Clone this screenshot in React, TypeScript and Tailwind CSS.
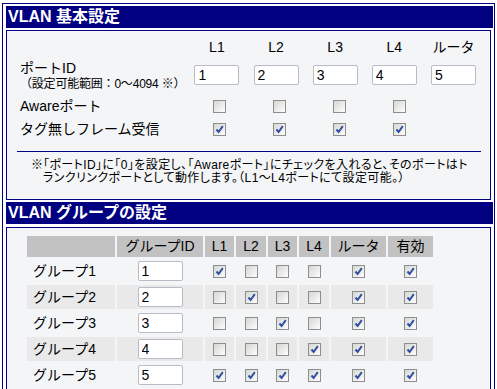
import React from "react"

const font = "font-['Liberation_Sans','Noto_Sans_CJK_JP',sans-serif]"

function Check({ on }: { on?: boolean }) {
  return (
    <span className="inline-flex w-[13px] h-[13px] border border-[#8e8e8e] bg-linear-to-br from-[#d6d6d2] to-[#fdfdfd] items-center justify-center">
      {on && (
        <svg width="9" height="9" viewBox="0 0 9 9">
          <path d="M1.5 4.5 L3.6 7 L7.8 1.2" stroke="#2f4ea4" strokeWidth="2" fill="none" />
        </svg>
      )}
    </span>
  )
}

function Field({ value }: { value: string }) {
  return (
    <input
      readOnly
      value={value}
      className="w-[45px] h-[20px] border border-[#b7bcc6] rounded-[2px] bg-white px-[3px] text-[14px] leading-none text-black outline-none"
    />
  )
}

function Header({ title }: { title: string }) {
  return (
    <div className="h-[22px] bg-[#000080] text-white font-bold text-[16px] leading-[22px] pl-[2px]">{title}</div>
  )
}

const ports = ["L1", "L2", "L3", "L4", "ルータ"]

const groups = [
  { name: "グループ1", id: "1", flags: [true, false, false, false, true, true] },
  { name: "グループ2", id: "2", flags: [false, true, false, false, true, true] },
  { name: "グループ3", id: "3", flags: [false, false, true, false, true, true] },
  { name: "グループ4", id: "4", flags: [false, false, false, true, true, true] },
  { name: "グループ5", id: "5", flags: [true, true, true, true, true, true] },
]

export default function App() {
  return (
    <div className={`bg-white min-h-screen text-black ${font}`}>
      <div className="ml-[2px] mt-[3px] w-[493px] border border-[#000080] pl-[3px] pr-[1px] pt-[2px]">
        {/* VLAN 基本設定 */}
        <Header title="VLAN 基本設定" />
        <div className="mt-[2px] w-[485px] h-[170px] border border-[#000080] bg-[#f4f5f7] text-[14px]">
          <div className="pl-[13px] pt-[6px]">
            <div className="flex h-[20px] items-center">
              <div className="w-[177px]" />
              {ports.map((p) => (
                <div key={p} className="w-[60px]">
                  <div className="w-[45px] text-center">{p}</div>
                </div>
              ))}
            </div>
            <div className="flex h-[37px] items-center">
              <div className="w-[177px] pt-[1px]">
                <div className="leading-[16px]">ポートID</div>
                <div className="leading-[16px] text-[12px] tracking-[-0.2px]">（設定可能範囲：0〜4094 ※）</div>
              </div>
              {["1", "2", "3", "4", "5"].map((v) => (
                <div key={v} className="w-[60px]">
                  <Field value={v} />
                </div>
              ))}
            </div>
            <div className="flex h-[24px] items-center">
              <div className="w-[177px]">Awareポート</div>
              {[0, 1, 2, 3].map((i) => (
                <div key={i} className="w-[60px]">
                  <div className="w-[45px] flex justify-center">
                    <Check />
                  </div>
                </div>
              ))}
            </div>
            <div className="flex h-[22px] items-center">
              <div className="w-[177px]">タグ無しフレーム受信</div>
              {[0, 1, 2, 3].map((i) => (
                <div key={i} className="w-[60px]">
                  <div className="w-[45px] flex justify-center">
                    <Check on />
                  </div>
                </div>
              ))}
            </div>
          </div>
          <div className="ml-[10px] mt-[11px] w-[464px] h-px bg-[#000080]" />
          <div className="mt-[7px] pl-[24px] flex text-[12px] leading-[13px] tracking-[0.4px] [font-feature-settings:'palt'] whitespace-nowrap">
            <span className="w-[12px]">※</span>
            <span>
              「ポートID」に「0」を設定し、「Awareポート」にチェックを入れると、そのポートはト
              <br />
              ランクリンクポートとして動作します。（L1〜L4ポートにて設定可能。）
            </span>
          </div>
        </div>

        {/* VLAN グループの設定 */}
        <div className="mt-[2px]">
          <Header title="VLAN グループの設定" />
        </div>
        <div className="mt-[3px] w-[485px] h-[170px] border border-[#000080] bg-[#f4f5f7] text-[14px] pl-[18px] pt-[6px]">
          <table className="border-separate border-spacing-[2px]">
            <thead>
              <tr className="h-[21px] bg-[#c2c2c2]">
                <th className="w-[88px] font-normal" />
                <th className="w-[86px] font-normal">グループID</th>
                <th className="w-[29px] font-normal">L1</th>
                <th className="w-[30px] font-normal">L2</th>
                <th className="w-[29px] font-normal">L3</th>
                <th className="w-[30px] font-normal">L4</th>
                <th className="w-[55px] font-normal">ルータ</th>
                <th className="w-[45px] font-normal">有効</th>
              </tr>
            </thead>
            <tbody>
              {groups.map((g, r) => (
                <tr key={g.name} className={`h-[24px] ${r % 2 === 1 ? "bg-[#e9e9e9]" : ""}`}>
                  <td className="pl-[6px] p-0">{g.name}</td>
                  <td className="p-0">
                    <div className="flex justify-center">
                      <Field value={g.id} />
                    </div>
                  </td>
                  {g.flags.map((f, i) => (
                    <td key={i} className="p-0">
                      <div className="flex justify-center">
                        <Check on={f} />
                      </div>
                    </td>
                  ))}
                </tr>
              ))}
            </tbody>
          </table>
        </div>
      </div>
    </div>
  )
}
